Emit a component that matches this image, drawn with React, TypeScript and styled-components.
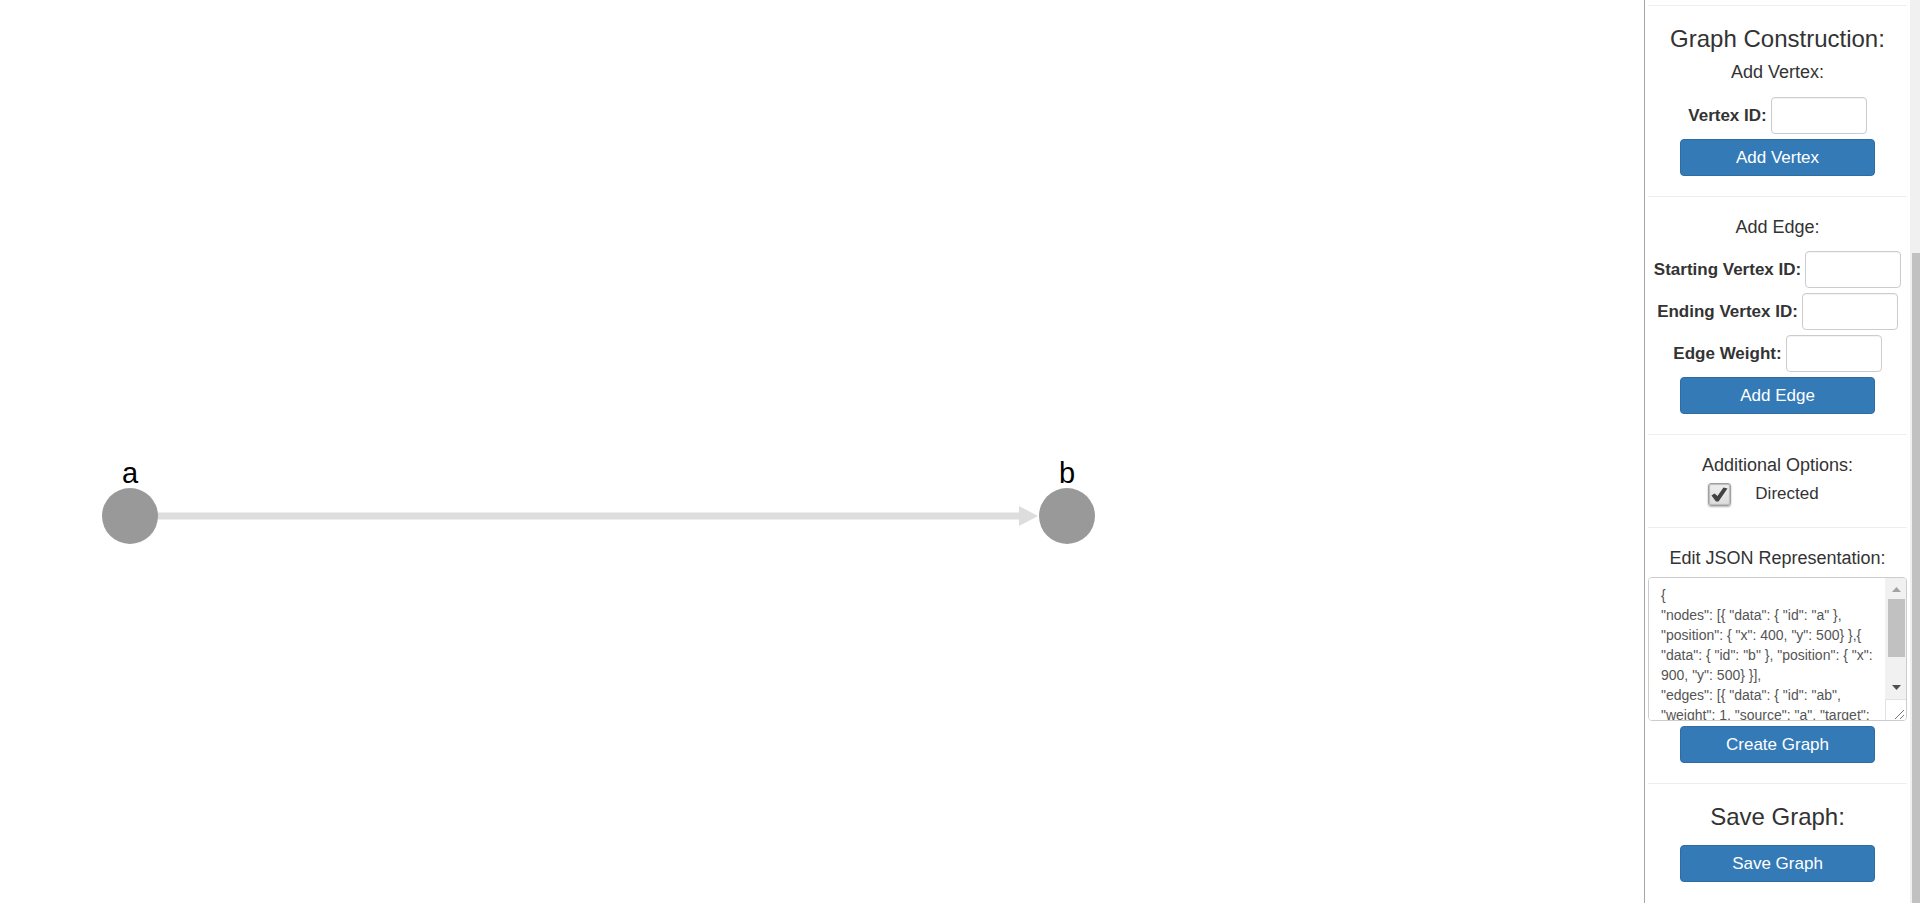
import React, { useState } from "react";
import styled, { createGlobalStyle } from "styled-components";

const GlobalStyle = createGlobalStyle`
  *, *::before, *::after { box-sizing: border-box; }
  body {
    margin: 0;
    background: #fff;
    color: #333;
    font-family: "Helvetica Neue", "Liberation Sans", Arial, sans-serif;
    font-size: 17px;
    line-height: 20px;
  }
`;

const Page = styled.div`
  display: grid;
  grid-template-columns: minmax(0, 1fr) 266px 10px;
  height: 100vh;
  overflow: hidden;
`;

const Canvas = styled.svg`
  display: block;
  width: 100%;
  height: 100%;
`;

const VertexLabel = styled.text`
  font-size: 29px;
  fill: #000;
  text-anchor: middle;
`;

const Sidebar = styled.aside`
  border-left: 1px solid #a6a6a6;
  padding: 5px 3px 0;
  overflow: hidden;
`;

const Section = styled.section`
  display: flex;
  flex-direction: column;
  align-items: center;
  border-top: 1px solid #eee;
  padding: 20px 0;
`;

const Title = styled.h3<{ $gap: number }>`
  margin: 0 0 ${(p) => p.$gap}px;
  font-size: 24px;
  font-weight: 400;
  line-height: 26px;
`;

const Subtitle = styled.h4<{ $gap: number }>`
  margin: 0 0 ${(p) => p.$gap}px;
  font-size: 18px;
  font-weight: 400;
  line-height: 20px;
`;

const Form = styled.form`
  display: flex;
  flex-direction: column;
  align-items: center;
  gap: 5px;
`;

const Field = styled.label`
  display: flex;
  align-items: center;
  gap: 4px;
  font-weight: 700;
  white-space: nowrap;
`;

const TextInput = styled.input`
  width: 96px;
  height: 37px;
  padding: 6px 12px;
  border: 1px solid #ccc;
  border-radius: 4px;
  background: #fff;
  color: #555;
  font: inherit;
  font-weight: 400;
  box-shadow: inset 0 1px 1px rgba(0, 0, 0, 0.05);
`;

const Button = styled.button`
  width: 195px;
  height: 37px;
  border: 1px solid #2e6da4;
  border-radius: 4px;
  background: #337ab7;
  color: #fff;
  font: inherit;
  cursor: pointer;
`;

const CheckRow = styled.label`
  display: flex;
  align-items: center;
  gap: 24px;
  height: 26px;
  margin-right: 28px;
`;

const CheckStack = styled.span`
  display: grid;
  > * { grid-area: 1 / 1; }
`;

const Checkbox = styled.input`
  appearance: none;
  width: 23px;
  height: 23px;
  margin: 0;
  border: 1px solid #a0a0a0;
  border-radius: 3px;
  background: linear-gradient(#eee, #dcdcdc);
  box-shadow: 0 1px 2px rgba(0, 0, 0, 0.3), inset 0 0 1px 1px #bbb;
`;

const CheckMark = styled.svg`
  width: 23px;
  height: 23px;
  pointer-events: none;
`;

const Editor = styled.div`
  display: grid;
  grid-template-columns: minmax(0, 1fr) 21px;
  align-self: stretch;
  height: 144px;
  margin-bottom: 5px;
  border: 1px solid #ccc;
  border-radius: 4px;
  overflow: hidden;
`;

const JsonArea = styled.textarea`
  width: 100%;
  height: 100%;
  padding: 7px 8px 0 12px;
  border: 0;
  outline: 0;
  resize: none;
  overflow: hidden;
  background: #fff;
  color: #555;
  font: inherit;
  font-size: 14px;
  line-height: 20px;
`;

const EditorBar = styled.div`
  display: grid;
  grid-template-rows: 21px 58px 1fr 22px 21px;
  justify-items: center;
  background: #f1f1f1;
  svg { display: block; width: 21px; height: 21px; }
`;

const EditorThumb = styled.div`
  width: 17px;
  background: #c1c1c1;
`;

const ResizeCorner = styled.div`
  background: #fff;
  border: solid #e2e2e2;
  border-width: 1px 0 0 1px;
`;

const PageTrack = styled.div`
  display: grid;
  grid-template-rows: 28% 1fr;
  padding-left: 2px;
  background: #f0f0f0;
`;

const PageThumb = styled.div`
  grid-row: 2;
  background: #c1c1c1;
`;

const initialJson = `{
"nodes": [{ "data": { "id": "a" }, "position": { "x": 400, "y": 500} },{ "data": { "id": "b" }, "position": { "x": 900, "y": 500} }],
"edges": [{ "data": { "id": "ab", "weight": 1, "source": "a", "target": "b" } }]
}`;

const vertices = [
  { id: "a", x: 130 },
  { id: "b", x: 1067 },
];

function GraphCanvas({ directed }: { directed: boolean }) {
  return (
    <Canvas role="img" aria-label="Graph with an edge from a to b">
      <line x1="130" y1="516" x2="1022" y2="516" stroke="#ddd" strokeWidth="7" />
      {directed && <path d="M1019 506 L1038 516 L1019 526 Z" fill="#ddd" />}
      {vertices.map((v) => (
        <g key={v.id}>
          <circle cx={v.x} cy="516" r="28" fill="#999" />
          <VertexLabel x={v.x} y="483">{v.id}</VertexLabel>
        </g>
      ))}
    </Canvas>
  );
}

function InputField({ label }: { label: string }) {
  return (
    <Field>
      {label}
      <TextInput type="text" />
    </Field>
  );
}

export default function App() {
  const [directed, setDirected] = useState(true);
  const [json, setJson] = useState(initialJson);
  const stop = (e: React.FormEvent) => e.preventDefault();

  return (
    <>
      <GlobalStyle />
      <Page>
        <GraphCanvas directed={directed} />
        <Sidebar>
          <Section>
            <Title $gap={10}>Graph Construction:</Title>
            <Subtitle $gap={15}>Add Vertex:</Subtitle>
            <Form onSubmit={stop}>
              <InputField label="Vertex ID:" />
              <Button>Add Vertex</Button>
            </Form>
          </Section>
          <Section>
            <Subtitle $gap={14}>Add Edge:</Subtitle>
            <Form onSubmit={stop}>
              <InputField label="Starting Vertex ID:" />
              <InputField label="Ending Vertex ID:" />
              <InputField label="Edge Weight:" />
              <Button>Add Edge</Button>
            </Form>
          </Section>
          <Section>
            <Subtitle $gap={6}>Additional Options:</Subtitle>
            <CheckRow>
              <CheckStack>
                <Checkbox
                  type="checkbox"
                  checked={directed}
                  onChange={(e) => setDirected(e.target.checked)}
                />
                {directed && (
                  <CheckMark viewBox="0 0 23 23" aria-hidden="true">
                    <path d="M3.5 12.5 L6.5 10.5 L9.5 13 L15.5 4.5 L19.5 5.5 L10.5 18.5 L8 18.5 Z" fill="#424242" />
                  </CheckMark>
                )}
              </CheckStack>
              Directed
            </CheckRow>
          </Section>
          <Section>
            <Subtitle $gap={9}>Edit JSON Representation:</Subtitle>
            <Editor>
              <JsonArea
                aria-label="Edit JSON Representation"
                spellCheck={false}
                value={json}
                onChange={(e) => setJson(e.target.value)}
              />
              <EditorBar aria-hidden="true">
                <svg viewBox="0 0 21 21"><path d="M6 14 L10.5 9 L15 14 Z" fill="#a3a3a3" /></svg>
                <EditorThumb />
                <span />
                <svg viewBox="0 0 21 21"><path d="M6 8 L15 8 L10.5 13 Z" fill="#505050" /></svg>
                <ResizeCorner>
                  <svg viewBox="0 0 21 21"><path d="M9 19 L18 10 M14 19 L18 15" stroke="#777" fill="none" /></svg>
                </ResizeCorner>
              </EditorBar>
            </Editor>
            <Button type="button">Create Graph</Button>
          </Section>
          <Section>
            <Title $gap={15}>Save Graph:</Title>
            <Button type="button">Save Graph</Button>
          </Section>
        </Sidebar>
        <PageTrack aria-hidden="true">
          <PageThumb />
        </PageTrack>
      </Page>
    </>
  );
}
